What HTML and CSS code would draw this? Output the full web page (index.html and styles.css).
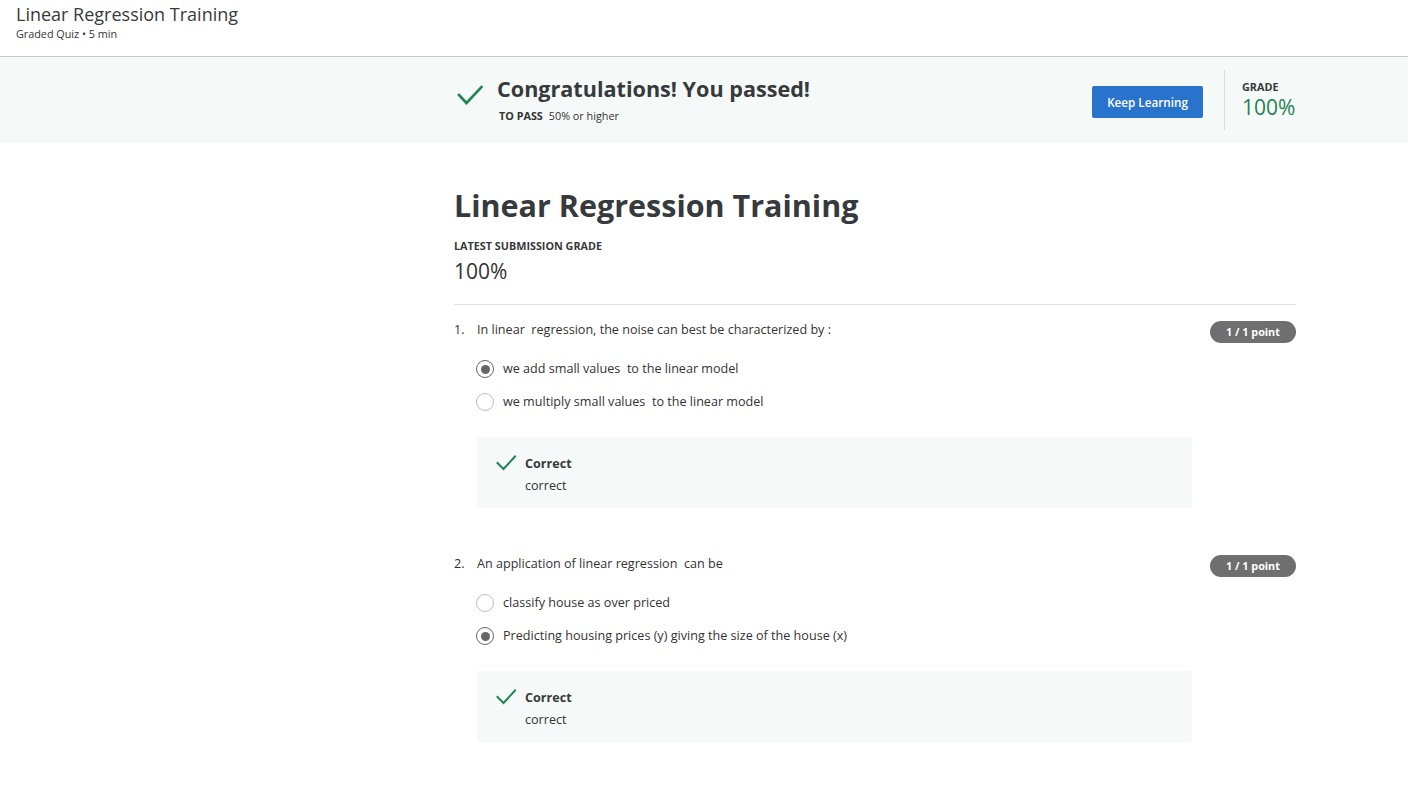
FILE: index.html
```html
<!DOCTYPE html>
<html lang="en">
<head>
<meta charset="utf-8">
<title>Linear Regression Training</title>
<link rel="stylesheet" href="styles.css">
</head>
<body>
<header class="topbar">
  <div class="topbar-title">Linear Regression Training</div>
  <div class="topbar-sub">Graded Quiz • 5 min</div>
</header>

<section class="banner">
  <div class="banner-inner">
    <div class="pass">
      <svg class="pass-check" width="26" height="26" viewBox="0 0 26 26" aria-hidden="true">
        <polyline points="2,13 9.5,21 24.5,5" fill="none" stroke="#1f8354" stroke-width="2.6" stroke-linecap="square"/>
      </svg>
      <div class="pass-text">
        <div class="pass-heading">Congratulations! You passed!</div>
        <div class="pass-req"><span class="pass-req-label">TO PASS</span>50% or higher</div>
      </div>
    </div>
    <button class="btn-primary" type="button">Keep Learning</button>
    <div class="banner-divider"></div>
    <div class="grade">
      <div class="grade-label">GRADE</div>
      <div class="grade-value">100%</div>
    </div>
  </div>
</section>

<main class="main">
  <h1 class="quiz-title">Linear Regression Training</h1>
  <div class="latest-label">LATEST SUBMISSION GRADE</div>
  <div class="latest-value">100%</div>
  <hr class="rule">

  <div class="question">
    <div class="q-num">1.</div>
    <div class="q-body">
      <div class="q-text">In linear&nbsp; regression, the noise can best be characterized by :</div>
      <div class="options">
        <div class="option"><span class="radio checked"></span><span>we add small values&nbsp; to the linear model</span></div>
        <div class="option"><span class="radio"></span><span>we multiply small values&nbsp; to the linear model</span></div>
      </div>
      <div class="feedback">
        <svg class="fb-check" width="20" height="20" viewBox="0 0 20 20" aria-hidden="true">
          <polyline points="1.5,10 7.5,16 19,3.5" fill="none" stroke="#1f8354" stroke-width="2" stroke-linecap="square"/>
        </svg>
        <div class="fb-text">
          <div class="fb-title">Correct</div>
          <div class="fb-msg">correct</div>
        </div>
      </div>
    </div>
    <div class="pill">1 / 1 point</div>
  </div>

  <div class="question">
    <div class="q-num">2.</div>
    <div class="q-body">
      <div class="q-text">An application of linear regression&nbsp; can be</div>
      <div class="options">
        <div class="option"><span class="radio"></span><span>classify house as over priced</span></div>
        <div class="option"><span class="radio checked"></span><span>Predicting housing prices (y) giving the size of the house (x)</span></div>
      </div>
      <div class="feedback">
        <svg class="fb-check" width="20" height="20" viewBox="0 0 20 20" aria-hidden="true">
          <polyline points="1.5,10 7.5,16 19,3.5" fill="none" stroke="#1f8354" stroke-width="2" stroke-linecap="square"/>
        </svg>
        <div class="fb-text">
          <div class="fb-title">Correct</div>
          <div class="fb-msg">correct</div>
        </div>
      </div>
    </div>
    <div class="pill">1 / 1 point</div>
  </div>
</main>
</body>
</html>
```

FILE: styles.css
```css
* { box-sizing: border-box; }

html, body {
  margin: 0;
  padding: 0;
  background: #ffffff;
  color: #333333;
  font-family: "Open Sans", "Noto Sans", "Liberation Sans", sans-serif;
}

/* Top bar */
.topbar {
  height: 57px;
  padding: 2px 16px 0;
  border-bottom: 1px solid #c8c8c8;
}
.topbar-title {
  font-size: 18px;
  line-height: 25px;
  color: #373a3c;
}
.topbar-sub {
  font-size: 10.8px;
  line-height: 14px;
  color: #333;
}

/* Banner */
.banner {
  background: #f5f9f8;
  height: 86px;
  padding: 13px 0;
}
.banner-inner {
  margin-left: 454px;
  width: 842px;
  height: 60px;
  display: flex;
  align-items: center;
}
.pass {
  flex: 1;
  display: flex;
  align-items: flex-start;
}
.pass-check {
  margin: 6px 0 0 3px;
  flex: none;
}
.pass-text {
  margin-left: 14px;
  margin-top: -1px;
}
.pass-heading {
  font-size: 21.6px;
  line-height: 28px;
  font-weight: 700;
  color: #373a3c;
}
.pass-req {
  margin-top: 5px;
  font-size: 10.8px;
  line-height: 16px;
  color: #333;
}
.pass-req-label {
  font-weight: 700;
  margin-right: 6px;
  margin-left: 2px;
}
.btn-primary {
  width: 111px;
  height: 32px;
  border: none;
  border-radius: 2px;
  background: #2a73cc;
  color: #ffffff;
  font-family: inherit;
  font-size: 11.7px;
  font-weight: 600;
  padding: 0;
  margin-top: 4px;
}
.banner-divider {
  align-self: stretch;
  width: 1px;
  background: #dcdcdc;
  margin: 0 17px 0 21px;
}
.grade {
  width: 54px;
}
.grade-label {
  font-size: 10.8px;
  line-height: 14px;
  font-weight: 700;
  color: #373a3c;
}
.grade-value {
  font-size: 21px;
  line-height: 26px;
  color: #1f8354;
}

/* Main */
.main {
  margin-left: 454px;
  width: 842px;
  padding-top: 42px;
  padding-bottom: 40px;
}
.quiz-title {
  margin: 0;
  font-size: 30.5px;
  line-height: 40px;
  font-weight: 700;
  color: #373a3c;
}
.latest-label {
  margin-top: 13px;
  font-size: 10.8px;
  line-height: 16px;
  font-weight: 700;
  color: #373a3c;
}
.latest-value {
  margin-top: 3px;
  font-size: 21px;
  line-height: 28px;
  color: #333;
}
.rule {
  margin: 19px 0 0;
  border: none;
  border-top: 1px solid #e1e1e1;
  height: 0;
}

.question {
  display: flex;
  align-items: flex-start;
  margin-top: 15px;
  font-size: 12.6px;
  line-height: 20px;
}
.question + .question {
  margin-top: 46px;
}
.q-num {
  width: 23px;
  flex: none;
}
.q-body {
  flex: 1;
  margin-right: 18px;
}
.options {
  margin-top: 19px;
  display: flex;
  flex-direction: column;
  gap: 13px;
}
.option {
  display: flex;
  align-items: center;
  gap: 9px;
  margin-left: -1px;
}
.radio {
  width: 18px;
  height: 18px;
  border-radius: 50%;
  border: 1.5px solid #bdbdbd;
  background: #fff;
  flex: none;
  position: relative;
}
.radio.checked {
  border: 1.5px solid #666666;
}
.radio.checked::after {
  content: "";
  position: absolute;
  left: 50%;
  top: 50%;
  width: 9px;
  height: 9px;
  margin: -4.5px 0 0 -4.5px;
  border-radius: 50%;
  background: #666666;
}

.feedback {
  margin-top: 25px;
  background: #f5f9f8;
  padding: 16px 19px 11px;
  display: flex;
  align-items: flex-start;
}
.fb-check {
  margin-top: 0;
  flex: none;
}
.fb-text {
  margin-left: 9px;
  line-height: 22px;
}
.fb-title {
  font-weight: 700;
  color: #373a3c;
}

.pill {
  flex: none;
  width: 86px;
  height: 22px;
  margin-top: 1px;
  border-radius: 11px;
  background: #6f6f6f;
  color: #ffffff;
  font-size: 10.8px;
  font-weight: 700;
  line-height: 22px;
  text-align: center;
}
```
